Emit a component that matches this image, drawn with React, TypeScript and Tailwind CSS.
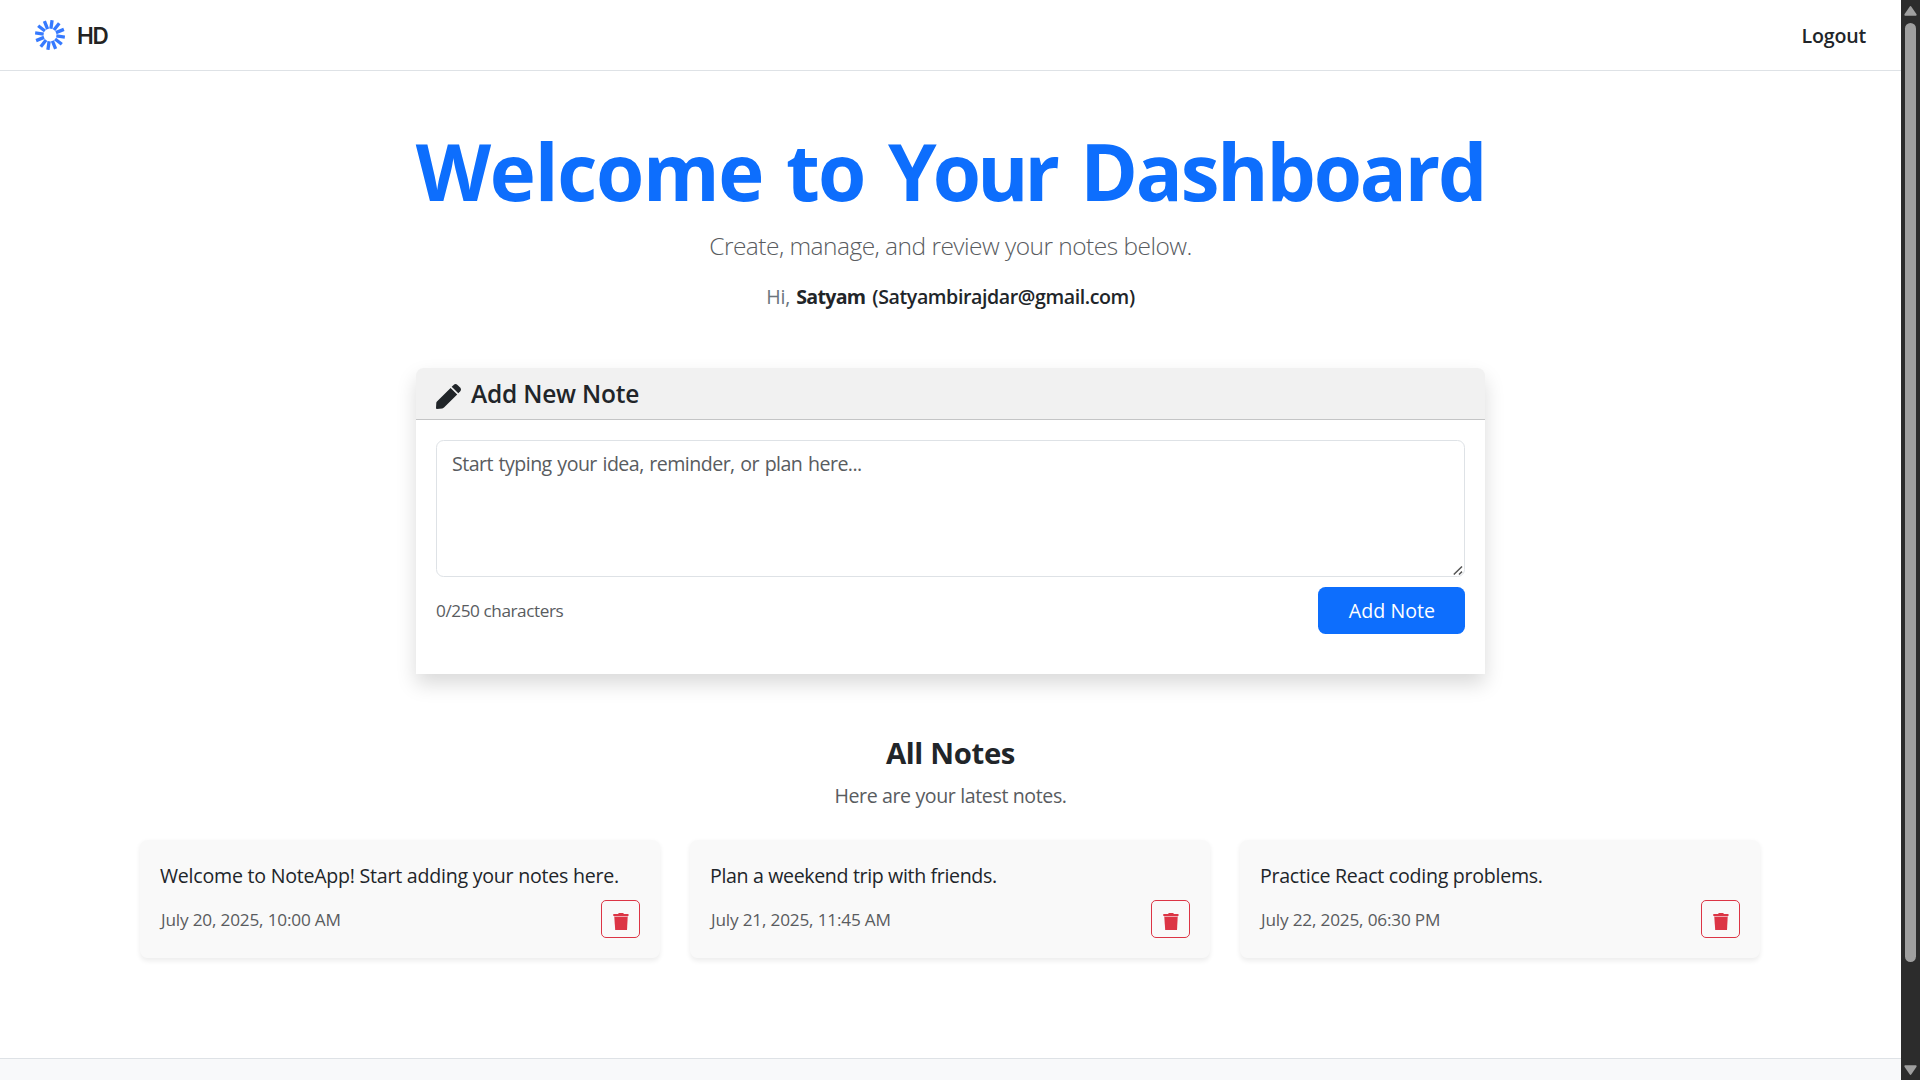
const notes = [
  { text: "Welcome to NoteApp! Start adding your notes here.", date: "July 20, 2025, 10:00 AM", spacing: "tracking-[-0.243px]" },
  { text: "Plan a weekend trip with friends.", date: "July 21, 2025, 11:45 AM", spacing: "tracking-[-0.36px]" },
  { text: "Practice React coding problems.", date: "July 22, 2025, 06:30 PM", spacing: "tracking-[-0.27px]" },
];

const rays = Array.from({ length: 12 }, (_, i) => 8 + i * 30);

function Logo() {
  return (
    <svg width="30" height="30" viewBox="-15 -15 30 30" stroke="#367aff" strokeWidth="3.3">
      {rays.map((a) => (
        <line key={a} x1="0" y1="-6.4" x2="0" y2="-15" transform={`rotate(${a})`} />
      ))}
    </svg>
  );
}

function PencilIcon() {
  return (
    <svg width="25" height="25" viewBox="0 0 25 25" fill="currentColor">
      <path d="M14.6 3.9 21.2 10.4 8 23.6Q7.3 24.3 6.3 24.5L.9 25Q0 25 0 24L.3 18.8Q.4 17.9 1.2 17.2Z" />
      <path d="M15.7 2.8 17.6.9Q19.5-.8 21.5.9L24.1 3.5Q25.9 5.5 24.1 7.4L22.3 9.3Z" />
    </svg>
  );
}

function TrashIcon() {
  return (
    <svg width="16" height="17" viewBox="0 0 16 17" fill="currentColor">
      <path d="M5.3 0.9 5.6 0h4.8l.3.9h4.8V3H.3V.9z" />
      <path d="M1.3 4h13.4L14 17H2.2z" />
      <path d="M1 3h14v1H1z" opacity="0.4" />
    </svg>
  );
}

function Scrollbar() {
  return (
    <div className="flex w-[19px] shrink-0 flex-col items-center bg-[#2c2c2c] pt-[6px] pb-[5px]">
      <svg width="13" height="10" viewBox="0 0 13 10" fill="#9f9f9f">
        <path d="M5.6.7a1.1 1.1 0 0 1 1.8 0L12.4 8c.5.9.1 1.7-.9 1.7h-10c-1 0-1.4-.8-.9-1.7z" />
      </svg>
      <div className="mt-[7px] h-[939px] w-[11px] rounded-full bg-[#9f9f9f]" />
      <svg className="mt-auto" width="13" height="10" viewBox="0 0 13 10" fill="#9f9f9f">
        <path d="M5.6 9.3a1.1 1.1 0 0 0 1.8 0L12.4 2c.5-.9.1-1.7-.9-1.7h-10C.5.3.1 1.1.6 2z" />
      </svg>
    </div>
  );
}

export default function App() {
  return (
    <div className="flex h-[1080px] w-[1920px] overflow-hidden bg-white font-['Open_Sans',sans-serif] text-[19.6px] leading-[30px] text-[#212529]">
      <div className="flex w-[1901px] flex-col">
        <header className="flex h-[71px] items-center justify-between border-b border-[#dee2e6] pr-[35px] pl-[35px]">
          <div className="flex items-center gap-[12px]">
            <Logo />
            <span className="pt-px font-['Inter',sans-serif] text-[22.5px] font-semibold tracking-[-1.2px] text-[#232323]">HD</span>
          </div>
          <a className="pt-px font-semibold tracking-[-0.2px]">Logout</a>
        </header>

        <main className="flex flex-col">
          <h1 className="mt-[52px] text-center text-[78px] leading-[96px] font-bold text-[#0d6efd]">
            <span className="tracking-[-1.3px]">Welcome </span>
            <span className="ml-[4px] tracking-[-1.8px]">to </span>
            <span className="ml-[5px] tracking-[-3.9px]">Your</span>
            <span className="ml-[6px] tracking-[-2.15px]"> Dashboard</span>
          </h1>
          <p className="mt-[8px] text-center text-[24.5px] leading-[38px] font-light tracking-[-0.53px] text-[#595c5f]">Create, manage, and review your notes below.</p>
          <p className="mt-[17px] flex justify-center gap-[6px]">
            <span className="tracking-[-0.2px] text-[#6c757d]">Hi,</span>
            <span className="font-bold tracking-[-0.7px]">Satyam</span>
            <span className="pl-px font-semibold tracking-[-0.41px]">(Satyambirajdar@gmail.com)</span>
          </p>

          <section className="mx-auto mt-[56px] h-[306px] w-[1069px] rounded-t-[7.5px] bg-white shadow-[0_10px_20px_rgba(0,0,0,0.15)]">
            <div className="flex h-[52px] gap-[10px] rounded-t-[7.5px] border-b border-[#c4c5c6] bg-[#f1f1f1] pt-[11px] pl-5">
              <div className="pt-[5px]">
                <PencilIcon />
              </div>
              <h2 className="text-[24.5px] leading-[30px] font-semibold tracking-[-0.21px]">Add New Note</h2>
            </div>
            <div className="px-5 pt-5">
              <div className="relative">
                <textarea
                  className="block h-[137px] w-full resize-none rounded-[7.5px] border border-[#dee2e6] bg-white px-[15px] py-[7.5px] leading-[30px] tracking-[-0.54px] [word-spacing:1.1px] outline-none placeholder:text-[#595c5f]"
                  placeholder="Start typing your idea, reminder, or plan here..."
                />
                <svg className="absolute right-[2px] bottom-[2px]" width="10" height="9" viewBox="0 0 10 9" stroke="#555" strokeWidth="1.5">
                  <path d="M.8 8.5 9 .5M6 8.5 9 5.6" />
                </svg>
              </div>
              <div className="mt-[10px] flex items-center justify-between">
                <span className="text-[17.2px] tracking-[-0.434px] text-[#595c5f]">0/250 characters</span>
                <button className="h-[47px] w-[147px] rounded-[7.5px] bg-[#0d6efd] pl-px tracking-[0.04px] text-white">Add Note</button>
              </div>
            </div>
          </section>

          <h2 className="mt-[61px] text-center text-[29.3px] leading-[36px] font-bold tracking-[-0.34px]">All Notes</h2>
          <p className="mt-[10px] text-center tracking-[-0.39px] text-[#595c5f]">Here are your latest notes.</p>

          <div className="mt-[29px] ml-[140px] grid w-[1620px] grid-cols-3 gap-[30px]">
            {notes.map((n) => (
              <article key={n.date} className="h-[118px] rounded-[7.5px] bg-[#f9f9f9] px-5 pt-[21px] shadow-[0_2.5px_5px_rgba(0,0,0,0.075)]">
                <p className={n.spacing}>{n.text}</p>
                <div className="mt-[9px] flex items-center justify-between">
                  <span className="pt-px pl-px text-[17.2px] tracking-[-0.18px] text-[#595c5f]">{n.date}</span>
                  <button className="flex h-[38px] w-[39px] items-center justify-center rounded-[5px] border border-[#dc3545] pt-[5px] text-[#dc3545]">
                    <TrashIcon />
                  </button>
                </div>
              </article>
            ))}
          </div>
        </main>

        <footer className="mt-[100px] grow border-t border-[#dee2e6] bg-[#f8f9fa]" />
      </div>
      <Scrollbar />
    </div>
  );
}
